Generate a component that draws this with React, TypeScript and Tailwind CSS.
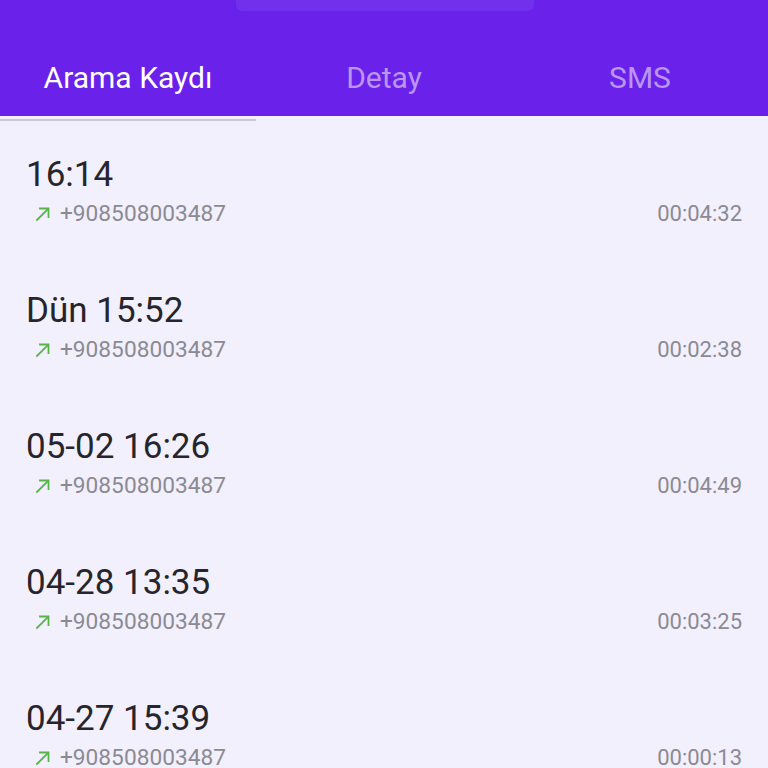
import React from 'react';

interface CallRow {
  time: string;
  phone: string;
  duration: string;
}

const calls: CallRow[] = [
  { time: '16:14', phone: '+908508003487', duration: '00:04:32' },
  { time: 'Dün 15:52', phone: '+908508003487', duration: '00:02:38' },
  { time: '05-02 16:26', phone: '+908508003487', duration: '00:04:49' },
  { time: '04-28 13:35', phone: '+908508003487', duration: '00:03:25' },
  { time: '04-27 15:39', phone: '+908508003487', duration: '00:00:13' },
];

const OutgoingIcon = () => (
  <svg width="18" height="18" viewBox="0 0 18 18" fill="none" className="shrink-0">
    <path d="M3 15 L14 4" stroke="#58b447" strokeWidth="1.8" strokeLinecap="square" />
    <path d="M6 3.5 H14.5 V12" stroke="#58b447" strokeWidth="1.8" strokeLinecap="square" />
  </svg>
);

export default function App() {
  const tabs = ['Arama Kaydı', 'Detay', 'SMS'];

  return (
    <div className="w-[768px] h-[768px] overflow-hidden bg-[#f3f0fd]" style={{ fontFamily: 'Roboto, "Noto Sans", sans-serif' }}>
      <div className="relative h-[116px] bg-[#6a22ea] flex items-end">
        <div className="absolute left-[236px] top-0 h-[11px] w-[298px] rounded-b-md bg-[#7030ee]" />
        <div className="grid grid-cols-3 w-full h-[76px]">
          {tabs.map((t, i) => (
            <div
              key={t}
              className={
                'flex items-center justify-center text-[30px] leading-none ' +
                (i === 0 ? 'text-white' : 'text-[#b996f2]')
              }
            >
              {t}
            </div>
          ))}
        </div>
      </div>
      <div className="mt-[3px] h-[2px] w-[256px] bg-[#cbc8d2]" />

      <div className="flex flex-col">
        {calls.map((c) => (
          <div key={c.time} className="h-[136px] px-[26px] pt-[34px]">
            <div className="text-[35px] leading-[40px] text-[#26252b]">{c.time}</div>
            <div className="mt-[5px] flex items-center justify-between h-[28px]">
              <div className="flex items-center gap-[8px] pl-[8px]">
                <OutgoingIcon />
                <span className="text-[22.7px] text-[#8b8a93] leading-none">{c.phone}</span>
              </div>
              <span className="text-[22px] text-[#8b8a93] leading-none">{c.duration}</span>
            </div>
          </div>
        ))}
      </div>
    </div>
  );
}
